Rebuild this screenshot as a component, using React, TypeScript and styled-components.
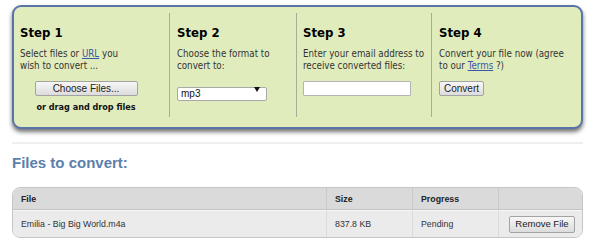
import React from "react";
import styled, { createGlobalStyle } from "styled-components";

const GlobalStyle = createGlobalStyle`
  html, body { margin: 0; padding: 0; background: #ffffff; }
  body { font-family: "Liberation Sans", Arial, sans-serif; }
`;

const Page = styled.div`
  width: 571px;
  padding: 5px 16px 0 12px;
`;

const Panel = styled.div`
  box-sizing: border-box;
  height: 124px;
  display: flex;
  padding: 6px 0 10px 6px;
  background: #e1ecbd;
  border: 2px solid #5a74a9;
  border-radius: 9px;
  box-shadow: 0 3px 4px rgba(0, 0, 0, 0.55);
`;

const Step = styled.div<{ $w?: number; $first?: boolean; $pl: number }>`
  box-sizing: border-box;
  ${(p) => (p.$w ? `flex: 0 0 ${p.$w}px;` : "flex: 1;")}
  border-left: ${(p) => (p.$first ? "none" : "1px solid #a7ae98")};
  padding: 12px 0 0 ${(p) => p.$pl}px;
  font-family: "DejaVu Sans Condensed", "DejaVu Sans", Verdana, sans-serif;
  font-stretch: condensed;
`;

const StepTitle = styled.h2`
  margin: 0;
  font-size: 13px;
  line-height: 16px;
  font-weight: bold;
  color: #000;
`;

const StepText = styled.p`
  margin: 7px 0 0;
  font-size: 9.7px;
  line-height: 12px;
  color: #333;
  white-space: nowrap;
`;

const Link = styled.a`
  color: #3a56a8;
  text-decoration: underline;
`;

const Actions = styled.div<{ $center?: boolean }>`
  margin-top: 9px;
  display: flex;
  flex-direction: column;
  align-items: ${(p) => (p.$center ? "center" : "flex-start")};
  width: ${(p) => (p.$center ? "132px" : "auto")};
`;

const Button = styled.button<{ $w: number; $h?: number }>`
  box-sizing: border-box;
  width: ${(p) => p.$w}px;
  height: ${(p) => p.$h ?? 15}px;
  padding: 0;
  margin: 0;
  font-family: "Liberation Sans", Arial, sans-serif;
  font-size: 10px;
  line-height: 1;
  color: #222;
  background: linear-gradient(#f7f7f7, #dcdcdc);
  border: 1px solid #a3a3a3;
  border-radius: 2px;
`;

const DropHint = styled.div`
  margin-top: 5px;
  font-size: 9px;
  line-height: 12px;
  font-weight: bold;
  color: #111;
  white-space: nowrap;
`;

const SelectWrap = styled.div`
  position: relative;
  width: 90px;
  height: 14px;
  margin-top: 1px;
`;

const Select = styled.select`
  box-sizing: border-box;
  appearance: none;
  width: 100%;
  height: 100%;
  margin: 0;
  padding: 0 0 0 3px;
  font-family: "Liberation Sans", Arial, sans-serif;
  font-size: 10px;
  color: #111;
  background: #fff;
  border: 1px solid #a9a9a9;
  border-radius: 2px;
  outline: none;
`;

const Arrow = styled.svg`
  position: absolute;
  right: 7px;
  top: 5px;
  pointer-events: none;
`;

const EmailInput = styled.input`
  box-sizing: border-box;
  width: 108px;
  height: 15px;
  margin: 0;
  padding: 0 3px;
  background: #fff;
  border: 1px solid #b4b4b4;
  border-radius: 1px;
  outline: none;
`;

const Rule = styled.div`
  margin-top: 13px;
  height: 2px;
  background: #efefef;
`;

const SectionTitle = styled.h1`
  margin: 10px 0 0;
  font-family: "Liberation Sans", Arial, sans-serif;
  font-size: 15px;
  line-height: 18px;
  font-weight: bold;
  color: #5c7fac;
`;

const Table = styled.table`
  box-sizing: border-box;
  margin-top: 15px;
  width: 571px;
  border-collapse: separate;
  border-spacing: 0;
  border: 1px solid #c6c6c6;
  border-radius: 8px;
  overflow: hidden;
  font-family: "Liberation Sans", Arial, sans-serif;
  font-size: 8.8px;
  color: #333;
  table-layout: fixed;
`;

const HeadCell = styled.th<{ $w?: number; $last?: boolean }>`
  box-sizing: border-box;
  ${(p) => (p.$w ? `width: ${p.$w}px;` : "")}
  height: 22px;
  padding: 0 0 0 8px;
  text-align: left;
  font-weight: bold;
  color: #222;
  background: #dadada;
  border-bottom: 1px solid #c4c4c4;
  border-right: ${(p) => (p.$last ? "none" : "1px solid #c9c9c9")};
`;

const Cell = styled.td<{ $last?: boolean }>`
  box-sizing: border-box;
  height: 27px;
  padding: 0 0 0 ${(p) => (p.$last ? 10 : 8)}px;
  background: #ebebeb;
  border-top: 1px solid #f6f6f6;
  border-right: ${(p) => (p.$last ? "none" : "1px solid #dadada")};
`;

const RemoveButton = styled(Button)`
  display: block;
  font-size: 9.5px;
`;

export default function App() {
  return (
    <>
      <GlobalStyle />
      <Page>
        <Panel>
          <Step $w={149} $first $pl={0}>
            <StepTitle>Step 1</StepTitle>
            <StepText>
              Select files or <Link href="#">URL</Link> you
              <br />
              wish to convert ...
            </StepText>
            <Actions $center>
              <Button $w={103}>Choose Files...</Button>
              <DropHint>or drag and drop files</DropHint>
            </Actions>
          </Step>
          <Step $w={127} $pl={7}>
            <StepTitle>Step 2</StepTitle>
            <StepText>
              Choose the format to
              <br />
              convert to:
            </StepText>
            <Actions>
              <SelectWrap>
                <Select defaultValue="mp3">
                  <option value="mp3">mp3</option>
                </Select>
                <Arrow width="6" height="5" viewBox="0 0 6 5">
                  <path d="M0 0 H6 L3 5 Z" fill="#111" />
                </Arrow>
              </SelectWrap>
            </Actions>
          </Step>
          <Step $w={135} $pl={6}>
            <StepTitle>Step 3</StepTitle>
            <StepText>
              Enter your email address to
              <br />
              receive converted files:
            </StepText>
            <Actions>
              <EmailInput type="text" />
            </Actions>
          </Step>
          <Step $pl={7}>
            <StepTitle>Step 4</StepTitle>
            <StepText>
              Convert your file now (agree
              <br />
              to our <Link href="#">Terms</Link> ?)
            </StepText>
            <Actions>
              <Button $w={45}>Convert</Button>
            </Actions>
          </Step>
        </Panel>
        <Rule />
        <SectionTitle>Files to convert:</SectionTitle>
        <Table>
          <thead>
            <tr>
              <HeadCell $w={314}>File</HeadCell>
              <HeadCell $w={86}>Size</HeadCell>
              <HeadCell $w={86}>Progress</HeadCell>
              <HeadCell $last></HeadCell>
            </tr>
          </thead>
          <tbody>
            <tr>
              <Cell>Emilia - Big Big World.m4a</Cell>
              <Cell>837.8 KB</Cell>
              <Cell>Pending</Cell>
              <Cell $last>
                <RemoveButton $w={66} $h={17}>
                  Remove File
                </RemoveButton>
              </Cell>
            </tr>
          </tbody>
        </Table>
      </Page>
    </>
  );
}
